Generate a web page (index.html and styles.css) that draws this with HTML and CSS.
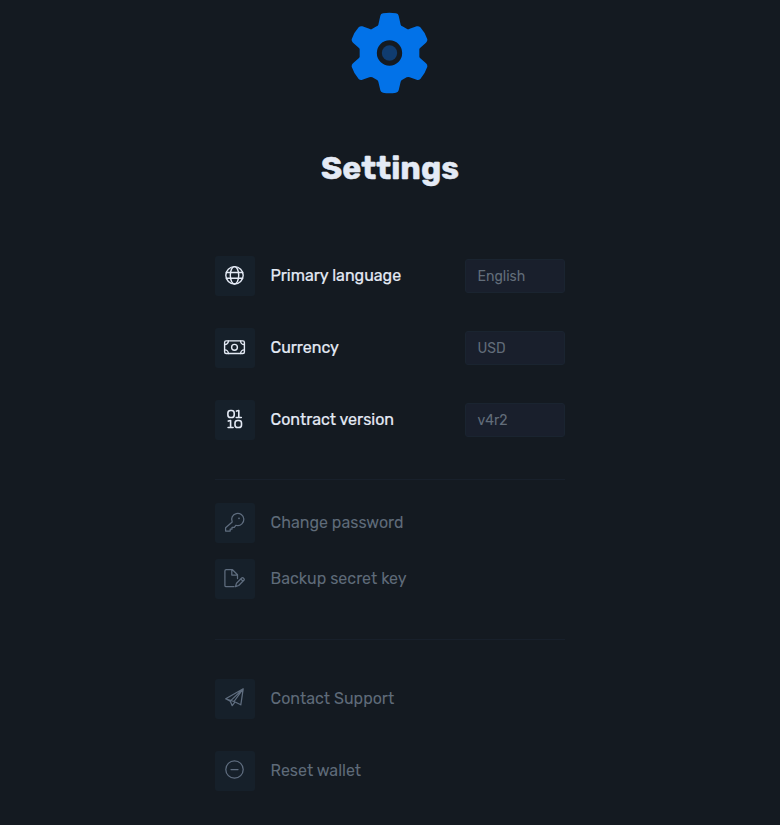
FILE: index.html
```html
<!DOCTYPE html>
<html lang="en">
<head>
<meta charset="utf-8">
<title>Settings</title>
<link rel="stylesheet" href="styles.css">
</head>
<body>
<main class="settings">
  <header class="hero">
    <svg class="gear" viewBox="0 0 300 300" aria-hidden="true">
      <path fill="#0272e8" fill-rule="evenodd" d="M121 47Q122 41 129 40Q148 37 168 40Q175 41 176 47L182 74Q183 77 187 79L200 86Q205 89 209 86L230 79Q236 77 241 82Q255 97 262 118Q263 124 258 128L240 144Q237 147 238 151V167Q237 171 240 174L258 190Q263 194 262 200Q255 221 241 237Q236 241 230 239L209 232Q205 230 200 232L187 239Q183 241 182 245L176 271Q175 277 168 278Q148 281 129 278Q122 277 121 271L115 245Q114 241 110 239L97 232Q93 230 88 232L67 239Q61 241 56 237Q42 221 35 200Q34 194 39 190L57 174Q60 171 59 167V151Q60 147 57 144L39 128Q34 124 35 118Q42 97 56 82Q61 77 67 79L88 86Q93 89 97 86L110 79Q114 77 115 74ZM148.500 121a38 38 0 1 0 0 76a38 38 0 1 0 0-76Z"/>
      <circle cx="148.500" cy="159" r="23" fill="#103c70"/>
    </svg>
    <h1 class="title">Settings</h1>
  </header>

  <section class="group group-main">
    <div class="row">
      <span class="tile"><svg class="icon" viewBox="0 0 24 24"><circle cx="12.500" cy="12.300" r="8.700"/><ellipse cx="12.500" cy="12.300" rx="4.200" ry="8.700"/><path d="M4.400 9.500h16.200M4.400 15.300h16.200"/></svg></span>
      <span class="label">Primary language</span>
      <span class="field">English</span>
    </div>
    <div class="row">
      <span class="tile"><svg class="icon" viewBox="0 0 24 24"><rect x="2.600" y="5.900" width="19.800" height="12.600" rx="1.500"/><circle cx="12.500" cy="12.300" r="2.900"/><path d="M6.400 5.900A3.600 3.600 0 0 1 2.800 9.500M18.600 5.900a3.600 3.600 0 0 0 3.600 3.600M6.400 18.500a3.600 3.600 0 0 0-3.600-3.600M18.600 18.500a3.600 3.600 0 0 1 3.600-3.600"/></svg></span>
      <span class="label">Currency</span>
      <span class="field">USD</span>
    </div>
    <div class="row">
      <span class="tile"><svg class="icon binary" viewBox="0 0 24 24"><rect x="5.900" y="3.500" width="6.300" height="7" rx="2.600"/><rect x="13" y="13.500" width="6.500" height="7" rx="2.600"/><path d="M14.500 4.100l2.300-.6v7M14.300 10.500h5M6.300 14.100l2.300-.6v7M6.100 20.500h5"/></svg></span>
      <span class="label">Contract version</span>
      <span class="field">v4r2</span>
    </div>
  </section>

  <section class="group group-security">
    <div class="row muted">
      <span class="tile"><svg class="icon" viewBox="0 0 24 24"><path d="M10.200 12A6.100 6.100 0 1 1 15 15.500L13.800 15.300 12.300 17.300H10V19H8.200V21H3.600V17.700L10.200 12"/><circle class="dot" cx="17" cy="8.300" r=".9"/></svg></span>
      <span class="label">Change password</span>
    </div>
    <div class="row muted">
      <span class="tile"><svg class="icon" viewBox="0 0 24 24"><path d="M12 20.700H4.200Q2.900 20.700 2.900 19.400V5Q2.900 3.700 4.200 3.700H10.500L15.500 8.700V12.500M9.800 3.700V9H15.500M13.500 20.700L14.500 17.200 19.700 12Q20.500 11.200 21.300 12L21.900 12.600Q22.700 13.400 21.900 14.200L16.700 19.500ZM18.800 13L20.900 15.100"/></svg></span>
      <span class="label">Backup secret key</span>
    </div>
  </section>

  <section class="group group-help">
    <div class="row muted">
      <span class="tile"><svg class="icon" viewBox="0 0 24 24"><path d="M3.700 12.800L21.200 2.800 18.800 18.800 12 15.500ZM3.700 12.800L8.200 15.100 21.200 2.800 12 15.500M8.200 15.100L10.200 19.700 12.900 16.200"/></svg></span>
      <span class="label">Contact Support</span>
    </div>
    <div class="row muted">
      <span class="tile"><svg class="icon" viewBox="0 0 24 24"><circle cx="12.500" cy="11.500" r="8.700"/><path d="M9 11.500h7"/></svg></span>
      <span class="label">Reset wallet</span>
    </div>
  </section>
</main>
</body>
</html>
```
FILE: styles.css
```css
* { box-sizing: border-box; }

body {
  margin: 0;
  min-height: 825px;
  background: #141a21;
  color: #e4eaf5;
  font-family: Rubik, Roboto, sans-serif;
}

.settings {
  width: 350px;
  margin: 0 auto;
}

.hero {
  display: flex;
  flex-direction: column;
  align-items: center;
  height: 256px;
}

.gear { width: 100px; height: 100px; }

.title {
  margin: 48px 0 0;
  font-size: 32px;
  line-height: 40px;
  font-weight: 700;
  white-space: nowrap;
  -webkit-text-stroke: 0.5px #e4eaf5;
}

.group {
  display: flex;
  flex-direction: column;
}

.group-main { gap: 32px; padding-bottom: 39px; }
.group-security { gap: 16px; padding: 23px 0 40px; border-top: 1px solid #18202b; }
.group-help { gap: 32px; padding-top: 39px; border-top: 1px solid #18202b; }

.row {
  display: flex;
  align-items: center;
  height: 40px;
}

.tile {
  display: flex;
  align-items: center;
  justify-content: center;
  width: 40px;
  height: 40px;
  margin-right: 15.5px;
  border-radius: 3px;
  background: #16202a;
}

.icon {
  width: 24px;
  height: 24px;
  margin: -2px 2px 0 0;
  fill: none;
  stroke: #e4eaf5;
  stroke-width: 1.4;
  stroke-linecap: round;
  stroke-linejoin: round;
}

.icon.binary { stroke-width: 1.6; }

.label {
  flex: 1;
  font-size: 16px;
  line-height: 24px;
  font-weight: 400;
  white-space: nowrap;
  -webkit-text-stroke: 0.2px #e4eaf5;
}

.muted { color: #5f6b79; }
.muted .label { -webkit-text-stroke: 0; }
.muted .icon { stroke: #5f6d7f; stroke-width: 1.25; }
.muted .dot { fill: #5f6d7f; stroke: none; }

.field {
  width: 100px;
  height: 34px;
  padding: 1px 11.5px 0;
  border: 1px solid #1a2430;
  border-radius: 3px;
  background: #191f2c;
  color: #626d7a;
  font-size: 14px;
  line-height: 32px;
}
```
